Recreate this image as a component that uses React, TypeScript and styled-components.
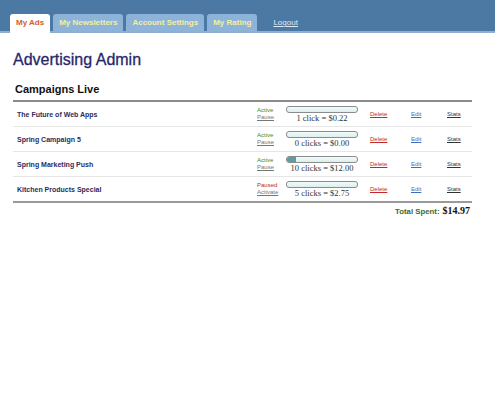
import React from "react";
import styled, { createGlobalStyle } from "styled-components";

const Global = createGlobalStyle`
  html, body { margin: 0; padding: 0; background: #ffffff; }
  body { font-family: "Liberation Sans", Arial, sans-serif; }
`;

const Header = styled.div`
  height: 31px;
  background: #4c79a4;
  border-bottom: 2px solid #8eb0d2;
  display: flex;
  align-items: flex-end;
  padding-left: 10px;
  gap: 3px;
`;

const Tab = styled.div<{ $active?: boolean }>`
  padding: 0 6px;
  display: flex;
  align-items: center;
  border-radius: 3px 3px 0 0;
  background: ${(p) => (p.$active ? "#ffffff" : "#8db3d8")};
  color: ${(p) => (p.$active ? "#d2602a" : "#f5eea0")};
  font-size: 8px;
  font-weight: bold;
  margin-bottom: ${(p) => (p.$active ? "-2px" : "0")};
  height: ${(p) => (p.$active ? "19px" : "17px")};
  padding-bottom: ${(p) => (p.$active ? "2px" : "0")};
  box-sizing: border-box;
`;

const Logout = styled.a`
  color: #dfe9f5;
  font-size: 8px;
  text-decoration: underline;
  margin-left: 13px;
  height: 17px;
  display: flex;
  align-items: center;
`;

const Main = styled.div`
  padding: 17px 23px 0 13px;
`;

const Title = styled.h1`
  margin: 0;
  font-size: 16px;
  font-weight: normal;
  color: #27286a;
  -webkit-text-stroke: 0.3px #27286a;
  line-height: 20px;
`;

const Section = styled.h2`
  margin: 12px 0 0 0;
  font-size: 11px;
  font-weight: bold;
  color: #111111;
  padding: 0 0 4px 2px;
  line-height: 14px;
  border-bottom: 2px solid #8a8a8a;
`;

const Row = styled.div<{ $last?: boolean }>`
  height: 24px;
  display: flex;
  align-items: center;
  border-bottom: ${(p) => (p.$last ? "2px solid #9a9a9a" : "1px solid #e6e6e6")};
`;

const Name = styled.div`
  width: 240px;
  padding-left: 4px;
  font-size: 7px;
  font-weight: bold;
  color: #2b2d5e;
`;

const StatusCol = styled.div`
  width: 29px;
  display: flex;
  flex-direction: column;
  font-size: 6px;
  line-height: 7px;
`;

const StatusLabel = styled.span<{ $paused?: boolean }>`
  color: ${(p) => (p.$paused ? "#c0282c" : "#3f8a1c")};
`;

const Toggle = styled.a`
  color: #777777;
  text-decoration: underline;
`;

const ProgressCol = styled.div`
  width: 72px;
  display: flex;
  flex-direction: column;
  align-items: center;
`;

const Bar = styled.div`
  width: 72px;
  height: 7px;
  box-sizing: border-box;
  border: 1px solid #8c8c8c;
  border-radius: 3px;
  background: linear-gradient(#f2fbfb, #dceeee);
  overflow: hidden;
`;

const Fill = styled.div`
  height: 100%;
  background: #5c9ea0;
`;

const Clicks = styled.div`
  font-family: "Liberation Serif", "Times New Roman", serif;
  font-size: 8.5px;
  line-height: 10px;
  color: #333333;
  white-space: nowrap;
`;

const Action = styled.a<{ $color: string; $width: number }>`
  width: ${(p) => p.$width}px;
  font-size: 6px;
  color: ${(p) => p.$color};
  text-decoration: underline;
`;

const Total = styled.div`
  display: flex;
  justify-content: flex-end;
  align-items: baseline;
  gap: 3px;
  padding-top: 2px;
  padding-right: 2px;
`;

const TotalLabel = styled.span`
  font-size: 7.8px;
  font-weight: bold;
  color: #3d6b1c;
`;

const TotalValue = styled.span`
  font-family: "Liberation Serif", "Times New Roman", serif;
  font-size: 10px;
  font-weight: bold;
  color: #111111;
`;

const Spacer = styled.div`
  width: 12px;
`;

const campaigns = [
  { name: "The Future of Web Apps", paused: false, fill: 0, clicks: "1 click = $0.22" },
  { name: "Spring Campaign 5", paused: false, fill: 0, clicks: "0 clicks = $0.00" },
  { name: "Spring Marketing Push", paused: false, fill: 9, clicks: "10 clicks = $12.00" },
  { name: "Kitchen Products Special", paused: true, fill: 0, clicks: "5 clicks = $2.75" },
];

export default function App() {
  return (
    <>
      <Global />
      <Header>
        <Tab $active>My Ads</Tab>
        <Tab>My Newsletters</Tab>
        <Tab>Account Settings</Tab>
        <Tab>My Rating</Tab>
        <Logout>Logout</Logout>
      </Header>
      <Main>
        <Title>Advertising Admin</Title>
        <Section>Campaigns Live</Section>
        {campaigns.map((c, i) => (
          <Row key={c.name} $last={i === campaigns.length - 1}>
            <Name>{c.name}</Name>
            <StatusCol>
              <StatusLabel $paused={c.paused}>{c.paused ? "Paused" : "Active"}</StatusLabel>
              <Toggle>{c.paused ? "Activate" : "Pause"}</Toggle>
            </StatusCol>
            <ProgressCol>
              <Bar>
                <Fill style={{ width: `${c.fill}px` }} />
              </Bar>
              <Clicks>{c.clicks}</Clicks>
            </ProgressCol>
            <Spacer />
            <Action $color="#c0282c" $width={41}>Delete</Action>
            <Action $color="#3c6cc4" $width={36}>Edit</Action>
            <Action $color="#333333" $width={20}>Stats</Action>
          </Row>
        ))}
        <Total>
          <TotalLabel>Total Spent:</TotalLabel>
          <TotalValue>$14.97</TotalValue>
        </Total>
      </Main>
    </>
  );
}
